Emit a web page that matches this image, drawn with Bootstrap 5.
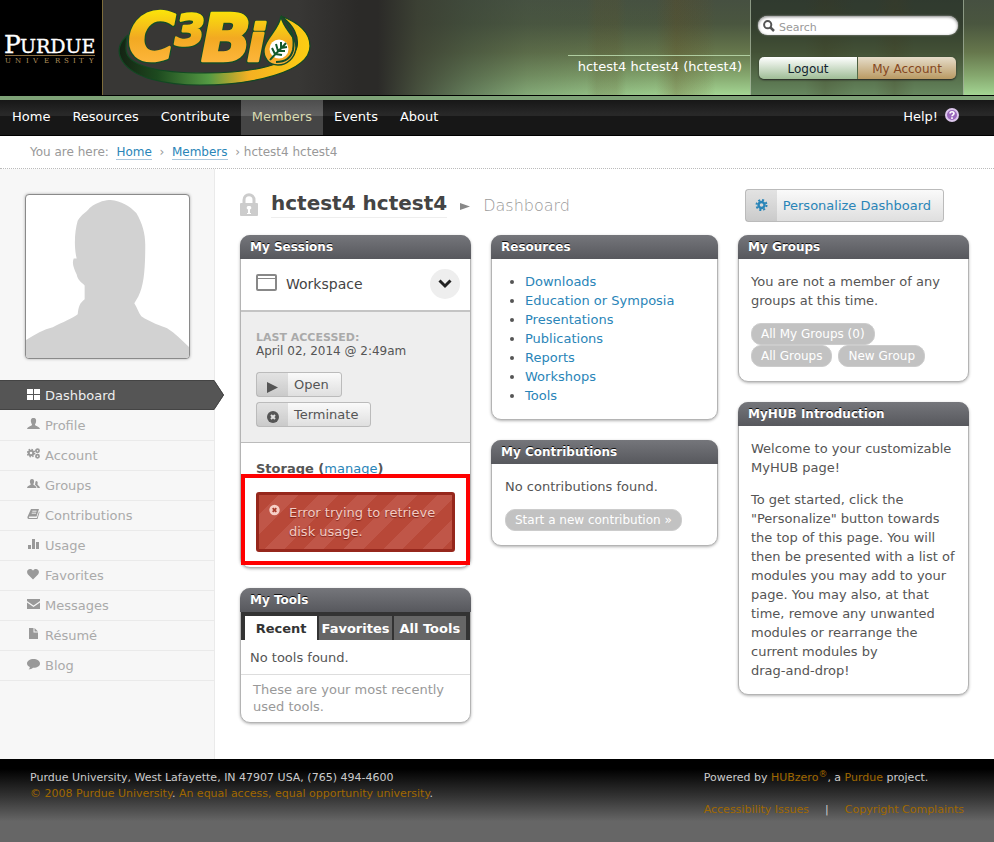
<!DOCTYPE html>
<html lang="en">
<head>
<meta charset="utf-8">
<meta name="viewport" content="width=device-width, initial-scale=1">
<title>C3Bio - hctest4 hctest4 - Dashboard</title>
<link rel="stylesheet" href="https://cdn.jsdelivr.net/npm/bootstrap@5.3.0/dist/css/bootstrap.min.css">
<style>
:root { --link: #2a85b8; --ink: #555; }
body { font-family: "DejaVu Sans", Verdana, sans-serif; font-size: 13px; line-height: 19px; color: var(--ink); background: #fff; }
a { color: var(--link); text-decoration: none; }
svg { flex: none; }

/* masthead */
.masthead {
  height: 96px; border-bottom: 1px solid #000;
  background:
    linear-gradient(90deg, #383735 0, #383735 30%, #2b2a28 36%, #2b2a28 38%, rgba(58,62,50,.88) 42%, rgba(60,70,56,.62) 47%, rgba(70,84,66,.35) 53%, rgba(70,90,66,.15) 62%, transparent 72%),
    linear-gradient(90deg, transparent 59%, rgba(100,80,35,.18) 60%, rgba(100,80,35,.18) 62%, transparent 63%, transparent 66%, rgba(100,75,30,.3) 68%, rgba(100,75,30,.1) 71%, transparent 72%, transparent 81%, rgba(90,75,30,.2) 83%, transparent 86%, transparent 88%, rgba(100,80,35,.22) 90%, transparent 92%),
    linear-gradient(180deg, #465041 0, #4a563f 25%, #66774c 55%, #86a86f 80%, #a3d593 100%);
}
.campus { width: 103px; background: #000; border-right: 1px solid #7d6c3b; }
.brand-letters { filter: drop-shadow(1px 0 0 #144d28) drop-shadow(-1px 0 0 #144d28) drop-shadow(0 1px 0 #144d28); }
.whoami { border-top: 1px solid #b0cda0; color: #fff; line-height: 20px; padding: 1px 8px 0 10px; margin-top: 55px; align-self: flex-start; }
.account-box { width: 214px; padding: 16px 5px 0 7px; margin-right: 30px; background: rgba(20,28,24,.42); border: solid rgba(200,215,190,.6); border-width: 0 1px; }
.search-box { height: 19px; border-radius: 10px; background: #fff; box-shadow: inset 0 1px 3px #888, 0 0 2px #aaa; padding-left: 5px; gap: 4px; }
.search-box input { border: 0; background: none; outline: 0; font-size: 11px; line-height: 15px; padding: 3px 0 0; color: #555; }
.search-box input::placeholder { color: #999; opacity: 1; }
.account-links { margin: 22px 2px 0 1px; border-radius: 5px; overflow: hidden; box-shadow: 0 1px 2px #222; gap: 1px; }
.account-links a { flex: 1; text-align: center; font-size: 12px; line-height: 22px; padding-top: 1px; height: 22px; }
.logout-link { background: linear-gradient(#fff, #9fbd96); color: #13242e; }
.profile-link { background: linear-gradient(#e6ddca, #b99a63); color: #85471f; }

/* main menu */
.mainnav { border-top: 4px solid #7ea277; border-bottom: 1px solid #000; padding-left: 1px; background: linear-gradient(#171717 0, #282828 40%, #282828 46%, #171717 46%); }
.mainnav a { display: block; color: #fff; padding: 7px 11px 9px; }
.mainnav a.current { background: linear-gradient(#4d4d4d 0, #5f5f5f 40%, #5f5f5f 46%, #454545 46%); color: #d8dab0; }
.mainnav .help-link { padding-right: 35px; padding-top: 7px; gap: 7px; }

.trail { border-bottom: 1px dotted #bbb; padding: 7px 30px 6px; color: #999; font-size: 12px; }
.trail a { border-bottom: 1px solid #a9c6dc; }

/* side column */
.side { width: 215px; flex: none; background: #f7f7f7; border-right: 1px solid #eaeaea; padding-top: 25px; }
.portrait { width: 165px; height: 165px; margin: 0 25px 21px; border: 1px solid #8a8a8a; border-radius: 4px; background: #fff; box-shadow: 0 0 3px #aaa; overflow: hidden; }
.side-menu a { height: 30px; padding-left: 27px; gap: 5px; color: #aaa; border-bottom: 1px solid #eaeaea; }
.side-menu svg { fill: #999; margin-top: -3px; }
.side-menu a.current { background: #555; color: #eee; border: solid #444; border-width: 1px 0; margin-bottom: 1px; position: relative; }
.side-menu a.current svg { fill: #fff; }
.side-menu a.current .tip { position: absolute; left: 100%; top: -1px; margin: 0; fill: #555; }

/* content */
.main { padding: 20px 25px 35px; }
.title-row { gap: 13px; margin-bottom: 13px; }
.title-row .sep-arrow { margin-top: 14px; }
.page-title { font-size: 20px; line-height: 28px; font-weight: bold; color: #444; border-bottom: 1px solid #eee; }
.page-sub { font-size: 16px; line-height: 24px; color: #999; font-weight: 200; padding-top: 5px; }
.soft-btn { display: inline-flex; align-items: stretch; border: 1px solid #bbb; border-radius: 3px; background: linear-gradient(#fafafa, #dfdfdf); color: var(--ink); line-height: 23px; padding: 0; text-align: left; }
.soft-btn .ico { width: 31px; background: rgba(0,0,0,.09); display: flex; align-items: center; justify-content: center; }
.soft-btn .lbl { padding: 0 12px 0 6px; }
.soft-btn.big { line-height: 31px; color: var(--link); margin-right: 25px; }
.modules { gap: 20px; align-items: flex-start; }
.modules > div { flex: 1; min-width: 0; display: flex; flex-direction: column; gap: 20px; }
.modules > .narrow { flex: 0 1 227px; }
.module { border: 1px solid #b4b4b4; border-radius: 10px; background: #fff; box-shadow: 0 1px 3px rgba(0,0,0,.3); }
.module > h3 { margin: -1px -1px 0; padding: 0 10px; font-size: 12px; line-height: 24px; font-weight: bold; color: #fff; background: linear-gradient(#75767b, #57585d); border-radius: 10px 10px 0 0; text-shadow: 0 -1px 0 #111; }
.module p { margin: 0; }
.module-text { padding: 13px 12px 14px; }
.module-text p + *, .module-text p + p { margin-top: 13px; }
.narrow .module-text { padding-left: 13px; }
.tag-pill { display: inline-block; background: #c2c2c2; border: 1px solid #ccc; border-radius: 10px; color: #fff; padding: 0 9px; font-size: 12px; line-height: 20px; }
.pill-row { column-gap: 6px; }
.session-row { padding: 10px 10px 11px 15px; border-bottom: 2px solid #c4c4c4; color: #444; font-size: 14px; gap: 9px; }
.round-toggle { width: 30px; height: 30px; border: 0; border-radius: 50%; background: #eee; padding: 0; }
.session-info { background: #eee; border-bottom: 1px solid #bbb; padding: 19px 15px 15px; line-height: 14px; gap: 5px; }
.session-info dl { font-size: 12px; margin: 0 0 9px; }
.session-info dt { font-size: 11px; line-height: 13px; color: #aaa; text-transform: uppercase; }
.storage-title { padding: 16px 15px 0; margin: 0 0 -4px; font-size: 13px; line-height: 19px; font-weight: bold; color: var(--ink); }
.storage-title a { font-weight: normal; }
.flagged { position: relative; border: 4px solid #f00; background: #fff; padding: 14px 11px 9px; margin-bottom: 2px; }
.error-note { border: 3px solid #96271c; border-radius: 3px; padding: 8px 10px; gap: 9px; color: #f3cbc3; text-shadow: 0 1px 1px #7c2319;
  background: repeating-linear-gradient(135deg, #b84838 0 14px, #c05648 14px 28px); }
.tool-tabs { background: #333; padding: 4px 4px 0; gap: 2px; }
.tool-tabs button { flex: 1 1 0; border: 0; background: #666; color: #fff; font-weight: bold; line-height: 24px; padding: 1px 0 0; height: 24px; }
.tool-tabs button.active { background: #fff; color: #333; }
.tool-none { padding: 8px 9px; border-bottom: 1px solid #ddd; height: 35px; }
.tool-hint { padding: 6px 12px 7px; color: #999; line-height: 17px; }

/* page foot */
.pagefoot { background: linear-gradient(#000 0, #000 12%, #333 45%, #666 75%, #666 100%); color: #ccc; font-size: 11px; line-height: 16px; padding: 11px 30px 0; min-height: 83px; }
.pagefoot a { color: #a06800; }
.pagefoot sup { font-size: 9px; line-height: 0; top: -4px; }
</style>
</head>
<body class="d-flex flex-column min-vh-100">

<header class="masthead d-flex">
  <a class="campus flex-shrink-0" href="#" aria-label="Purdue University">
    <svg width="102" height="95" viewBox="0 0 102 95" font-family="'DejaVu Serif', serif">
      <text x="4" y="53" font-size="25" fill="#fff" stroke="#fff" stroke-width=".4">P<tspan x="20" font-size="19">URDUE</tspan></text>
      <path d="M5 55.500H95" stroke="#8d7042"/>
      <text y="63" x="5 15 26 33 44 55 64 73 79 89" fill="#b08f5c" font-size="7">UNIVERSITY</text>
    </svg>
  </a>
  <a href="#" class="flex-shrink-0" aria-label="C3Bio">
    <svg width="225" height="95" viewBox="103 0 225 95">
      <defs>
        <linearGradient id="gold" x1="0" y1="0" x2="0" y2="1"><stop offset="0" stop-color="#f8e40c"/><stop offset=".55" stop-color="#f3ac20"/><stop offset="1" stop-color="#fcb035"/></linearGradient>
        <linearGradient id="letters" gradientUnits="userSpaceOnUse" x1="0" y1="8" x2="0" y2="63"><stop offset="0" stop-color="#fbe808"/><stop offset=".55" stop-color="#f2a922"/><stop offset="1" stop-color="#fdb63c"/></linearGradient>
        <linearGradient id="swoosh"><stop offset="0" stop-color="#142313"/><stop offset=".2" stop-color="#1d4a1f"/><stop offset=".47" stop-color="#549a43"/><stop offset=".68" stop-color="#f4b022"/><stop offset="1" stop-color="#fbce12"/></linearGradient>
      </defs>
      <path d="M128 35C119 42 116 52 123 62C134 78 165 85 200 85C250 85 310 73 310 46C310 32 297 22 281 16C294 25 299 37 297 47C293 65 250 73 205 73C160 73 124 67 126 47C126 42 126 39 128 35Z" fill="url(#swoosh)" stroke="#124823" stroke-width="1.200"/>
      <text class="brand-letters" font-family="'DejaVu Sans', sans-serif" font-weight="bold" font-style="italic" fill="url(#letters)" stroke="url(#letters)" stroke-width="2.600" stroke-linejoin="round"><tspan x="128" y="60" font-size="65">C</tspan><tspan x="175" y="45" font-size="43">3</tspan><tspan x="201" y="61" font-size="66">B</tspan><tspan x="247" y="61" font-size="52">i</tspan></text>
      <path d="M281 16C283 30 297 36 296 48C295 58 287 65 278 65C269 65 263 58 264 49C266 37 279 30 281 16Z" fill="url(#gold)" stroke="#144d28" stroke-width="1.500"/>
      <path d="M284 19C292 30 295 38 293 50C291 58 285 62 276 62" fill="none" stroke="#144d28" stroke-width="2"/>
      <circle cx="279" cy="49" r="9.500" fill="#fff"/>
      <path d="M270 60C274 55 280 50 286 43M275 54L272 48M275 54L282 55M278 51L276 44M278 51L285 51M281 48L281 42M281 48L287 47" stroke="#145a2c" stroke-width="2" fill="none"/>
    </svg>
  </a>
  <div class="whoami ms-auto">hctest4 hctest4 (hctest4)</div>
  <div class="account-box flex-shrink-0">
    <form class="search-box d-flex align-items-center" role="search">
      <label for="q" class="d-flex" aria-label="Search"><svg width="12" height="12" viewBox="0 0 12 12" fill="none" stroke="#555"><circle cx="4.700" cy="4.700" r="3.600" stroke-width="2"/><path d="M7.500 7.500L11 11" stroke-width="2.500"/></svg></label>
      <input id="q" type="text" class="flex-fill" placeholder="Search">
    </form>
    <div class="account-links d-flex">
      <a href="#" class="logout-link">Logout</a>
      <a href="#" class="profile-link">My Account</a>
    </div>
  </div>
</header>

<nav class="mainnav d-flex" aria-label="Main">
  <a href="#">Home</a><a href="#">Resources</a><a href="#">Contribute</a><a href="#" class="current" aria-current="true">Members</a><a href="#">Events</a><a href="#">About</a>
  <a href="#" class="help-link ms-auto d-flex align-items-start">Help!
    <svg width="14" height="16" viewBox="0 0 14 16"><circle cx="7" cy="8" r="6" fill="#9a68bd" stroke="#dcc6ec" stroke-width="2"/><path d="M5 6.500C5 4.200 9 4.200 9 6.500C9 7.800 7 7.800 7 9.300M7 10.300V12" fill="none" stroke="#fff" stroke-width="1.600"/></svg>
  </a>
</nav>

<div class="trail">You are here: &nbsp;<a href="#">Home</a>&nbsp; › &nbsp;<a href="#">Members</a>&nbsp; › hctest4 hctest4</div>

<div class="d-flex flex-grow-1">
  <aside class="side">
    <div class="portrait">
      <svg class="d-block" width="163" height="163" viewBox="0 0 164 164" fill="#d2d2d2"><path d="M0 146C9 140 18 135 27 133C37 128 47 124 52 120C53 112 54 109 59 105V91C56 88 52 86 51 80C48 73 46 69 48 64H51C48 52 49 36 52 26C56 19 60 18 64 13C73 6 81 5 85 5C96 6 104 11 111 18C117 28 120 39 120 50C120 72 119 91 113 102L109 109C112 114 113 118 116 122C125 128 136 132 142 134C150 139 157 146 164 153V164H0Z"/></svg>
    </div>
    <nav class="side-menu d-flex flex-column" aria-label="Profile">
      <a href="#" class="current d-flex align-items-center" aria-current="page"><svg width="13" height="12" viewBox="0 0 13 12"><path d="M0 1H6V6H0ZM7 1H13V6H7ZM0 7H6V12H0ZM7 7H13V12H7Z"/></svg>Dashboard<svg class="tip" width="11" height="30" viewBox="0 0 11 30"><path d="M0 0L10 15L0 30Z"/><path d="M0 .5L9.500 15L0 29.500" fill="none" stroke="#444"/></svg></a>
      <a href="#" class="d-flex align-items-center"><svg width="13" height="12" viewBox="0 0 13 12"><path d="M6.500 0C9 0 9.400 2 9 4C8.700 5.500 8 6 8 7C8.500 8 12.500 8.500 13 11H0C.5 8.500 4.500 8 5 7C5 6 4.300 5.500 4 4C3.600 2 4 0 6.500 0Z"/></svg>Profile</a>
      <a href="#" class="d-flex align-items-center"><svg width="13" height="12" viewBox="0 0 13 12"><g fill="none" stroke="#999"><circle cx="4" cy="5" r="2.300" stroke-width="2"/><circle cx="4" cy="5" r="3.700" stroke-width="1.400" stroke-dasharray="1.500 1.406"/><circle cx="10.500" cy="2.800" r="1.600" stroke-width="1.700"/><circle cx="10.500" cy="8.200" r="1.600" stroke-width="1.700"/></g></svg>Account</a>
      <a href="#" class="d-flex align-items-center"><svg width="13" height="12" viewBox="0 0 13 12"><path d="M5 1C7 1 7.300 3 7 4.500C6.700 5.500 6.300 6 6.300 6.500C7 7.500 9 7.500 9.500 10H0C.5 7.500 3 7.500 3.800 6.500C3.800 6 3.300 5.500 3 4.500C2.700 3 3 1 5 1ZM9 3C10.700 3 11 4.500 10.500 6C10.300 7.500 12.500 7.500 13 10H10.500C10 8 8.500 7.500 8 6.700C8.500 5 8 4 9 3Z"/></svg>Groups</a>
      <a href="#" class="d-flex align-items-center"><svg width="13" height="12" viewBox="0 0 13 12"><path d="M4 1H12L9.500 8.500H2.500C1.500 8.700 1.800 10 2.500 10H9.800L12 3.500L12.600 4L10.500 11H1.800C.3 10.800 .2 9.500 .6 8.500Z"/><path d="M5.300 3.200H9.500M4.700 5.200H9" stroke="#f7f7f7" stroke-width=".9"/></svg>Contributions</a>
      <a href="#" class="d-flex align-items-center"><svg width="13" height="12" viewBox="0 0 13 12"><path d="M1 7H4V11H1ZM5 1H8V11H5ZM9 4H12V11H9Z"/></svg>Usage</a>
      <a href="#" class="d-flex align-items-center"><svg width="13" height="12" viewBox="0 0 13 12"><path d="M6 11.500L1 6.500C-1 4 .5 1 3 1C4.500 1 5.500 1.700 6 2.700C6.500 1.700 7.500 1 9 1C11.500 1 13 4 11 6.500Z"/></svg>Favorites</a>
      <a href="#" class="d-flex align-items-center"><svg width="13" height="12" viewBox="0 0 13 12"><path d="M0 1H13V3L6.500 7.500L0 3ZM0 4.500L6.500 9L13 4.500V11H0Z"/></svg>Messages</a>
      <a href="#" class="d-flex align-items-center"><svg width="13" height="12" viewBox="0 0 13 12"><path d="M2 0H6.500V4.500H11V11H2ZM7.500 0L11 3.500H7.500Z"/></svg>Résumé</a>
      <a href="#" class="d-flex align-items-center"><svg width="13" height="12" viewBox="0 0 13 12"><path d="M6.500 1C10 1 13 2.800 13 5.500C13 8.200 10 10 6 9.800C5 11 3 11.500 1.500 11.500C2.500 10.800 2.800 10 2.800 9C1 8.200 0 7 0 5.500C0 2.800 3 1 6.500 1Z"/></svg>Blog</a>
    </nav>
  </aside>

  <main class="main flex-grow-1">
    <div class="title-row d-flex align-items-start">
      <svg class="mt-1" width="18" height="24" viewBox="0 0 18 24"><path d="M4 11V7C4 0 14 0 14 7V11" fill="none" stroke="#ccc" stroke-width="3"/><rect y="10" width="18" height="13" rx="1" fill="#ccc"/><path d="M9 13A1.800 1.800 0 0 1 10 16.500V20H11V21H7V20H8V16.500A1.800 1.800 0 0 1 9 13Z" fill="#fff"/></svg>
      <h2 class="page-title mb-0">hctest4 hctest4</h2>
      <svg class="sep-arrow" width="10" height="7" viewBox="0 0 10 7"><path d="M0 0L10 3.500L0 7Z" fill="#888"/></svg>
      <span class="page-sub">Dashboard</span>
      <a href="#" class="soft-btn big ms-auto"><span class="ico"><svg width="13" height="13" viewBox="0 0 13 13"><circle cx="6.500" cy="6" r="3" fill="none" stroke="#2a85b8" stroke-width="2.400"/><circle cx="6.500" cy="6" r="5" fill="none" stroke="#2a85b8" stroke-width="2" stroke-dasharray="2 1.927"/></svg></span><span class="lbl">Personalize Dashboard</span></a>
    </div>

    <div class="modules d-flex">
      <div>
        <section class="module">
          <h3>My Sessions</h3>
          <div class="session-row d-flex align-items-center">
            <svg class="mb-1" width="21" height="17" viewBox="0 0 21 17"><rect x="1" y="1" width="19" height="15" rx="1" fill="#fff" stroke="#888" stroke-width="2"/><path d="M1 4.500H20" stroke="#888"/></svg>
            <span>Workspace</span>
            <button type="button" class="round-toggle ms-auto" aria-label="Toggle session"><svg class="d-block mx-auto" width="14" height="10" viewBox="0 0 14 10"><path d="M1.500 1.500L7 7L12.500 1.500" fill="none" stroke="#222" stroke-width="3"/></svg></button>
          </div>
          <div class="session-info d-flex flex-column align-items-start">
            <dl><dt>Last accessed:</dt><dd class="mb-0">April 02, 2014 @ 2:49am</dd></dl>
            <button type="button" class="soft-btn"><span class="ico"><svg width="11" height="16" viewBox="0 0 11 16"><path d="M0 5L11 10.500L0 16Z" fill="#555"/></svg></span><span class="lbl">Open</span></button>
            <button type="button" class="soft-btn"><span class="ico"><svg width="12" height="16" viewBox="0 0 12 16"><circle cx="6" cy="10" r="6" fill="#555"/><path d="M4 8L8 12M8 8L4 12" stroke="#e0e0e0" stroke-width="2"/></svg></span><span class="lbl">Terminate</span></button>
          </div>
          <h4 class="storage-title">Storage (<a href="#">manage</a>)</h4>
          <div class="flagged">
            <div class="error-note d-flex" role="alert">
              <svg width="11" height="13" viewBox="0 0 11 13"><circle cx="5.500" cy="7" r="5.200" fill="#f6cfc7"/><path d="M3.700 5.200L7.300 8.800M7.300 5.200L3.700 8.800" stroke="#a83a2c" stroke-width="1.800"/></svg>
              <span>Error trying to retrieve disk usage.</span>
            </div>
          </div>
        </section>

        <section class="module">
          <h3>My Tools</h3>
          <div class="tool-tabs d-flex" role="tablist">
            <button type="button" role="tab" class="active" aria-selected="true">Recent</button>
            <button type="button" role="tab" aria-selected="false">Favorites</button>
            <button type="button" role="tab" aria-selected="false">All Tools</button>
          </div>
          <p class="tool-none">No tools found.</p>
          <p class="tool-hint">These are your most recently used tools.</p>
        </section>
      </div>

      <div class="narrow">
        <section class="module">
          <h3>Resources</h3>
          <div class="module-text">
            <ul class="mb-0 ps-3 ms-1">
              <li><a href="#">Downloads</a></li><li><a href="#">Education or Symposia</a></li><li><a href="#">Presentations</a></li><li><a href="#">Publications</a></li><li><a href="#">Reports</a></li><li><a href="#">Workshops</a></li><li><a href="#">Tools</a></li>
            </ul>
          </div>
        </section>
        <section class="module">
          <h3>My Contributions</h3>
          <div class="module-text">
            <p>No contributions found.</p>
            <a href="#" class="tag-pill">Start a new contribution »</a>
          </div>
        </section>
      </div>

      <div>
        <section class="module">
          <h3>My Groups</h3>
          <div class="module-text">
            <p>You are not a member of any groups at this time.</p>
            <div class="pill-row d-flex flex-wrap"><a href="#" class="tag-pill">All My Groups (0)</a><a href="#" class="tag-pill">All Groups</a><a href="#" class="tag-pill">New Group</a></div>
          </div>
        </section>
        <section class="module">
          <h3>MyHUB Introduction</h3>
          <div class="module-text">
            <p>Welcome to your customizable MyHUB page!</p>
            <p>To get started, click the "Personalize" button towards the top of this page. You will then be presented with a list of modules you may add to your page. You may also, at that time, remove any unwanted modules or rearrange the current modules by <span class="text-nowrap">drag-and-drop!</span></p>
          </div>
        </section>
      </div>
    </div>
  </main>
</div>

<footer class="pagefoot d-flex justify-content-between">
  <div>Purdue University, West Lafayette, IN 47907 USA, (765) 494-4600<br><a href="#">© 2008 Purdue University</a>. <a href="#">An equal access, equal opportunity university</a>.</div>
  <div>Powered by <a href="#">HUBzero<sup>®</sup></a>, a <a href="#">Purdue</a> project.
    <div class="d-flex gap-2 mt-3"><a href="#">Accessibility Issues</a><span class="px-2">|</span><a href="#">Copyright Complaints</a></div>
  </div>
</footer>

<script src="https://cdn.jsdelivr.net/npm/bootstrap@5.3.0/dist/js/bootstrap.bundle.min.js"></script>
</body>
</html>
